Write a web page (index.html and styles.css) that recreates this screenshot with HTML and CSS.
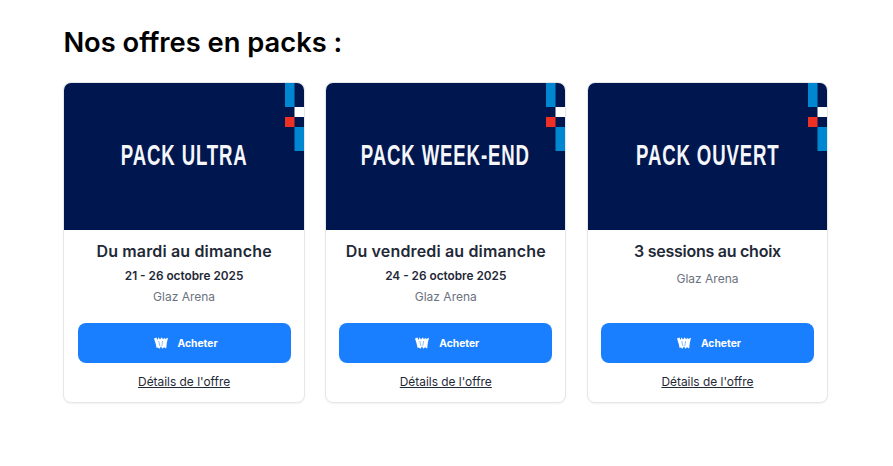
FILE: index.html
```html
<!DOCTYPE html>
<html lang="fr">
<head>
<meta charset="utf-8">
<title>Nos offres en packs</title>
<link rel="stylesheet" href="styles.css">
</head>
<body>
<main class="page">
  <h1 class="heading">Nos offres en packs :</h1>
  <div class="cards">
    <article class="card">
      <div class="banner">
        <span class="banner-title">PACK ULTRA</span>
        <svg class="flag" viewBox="0 0 20 68" preserveAspectRatio="none" aria-hidden="true"><rect x="0" y="0" width="10" height="24" fill="#0087d1"/><rect x="10" y="24" width="10" height="10" fill="#fff"/><rect x="0" y="34" width="10" height="10" fill="#ee3124"/><rect x="10" y="44" width="10" height="24" fill="#0087d1"/></svg>
      </div>
      <div class="body">
        <h2 class="title">Du mardi au dimanche</h2>
        <p class="date">21 - 26 octobre 2025</p>
        <p class="place">Glaz Arena</p>
        <a class="buy" href="#"><svg class="ticket" viewBox="0 0 14 12" aria-hidden="true"><path d="M0 1.5 2.4.6 3.6 3 4.4.3 6 2.4 7.8.3 9 2.4 10.2.8 11 2 14 .8 12.8 6 12.2 11.5 10 10.2 8.2 11.8 7 9.2 5.6 11.8 3.6 10.4 2.6 11 1.6 6.5Z" fill="#fff"/><path d="M4.8 4 5.8 9M8.6 4 7.8 9" stroke="#1a7fff" stroke-width=".5"/></svg>Acheter</a>
        <a class="details" href="#">Détails de l'offre</a>
      </div>
    </article>
    <article class="card">
      <div class="banner">
        <span class="banner-title">PACK WEEK-END</span>
        <svg class="flag" viewBox="0 0 20 68" preserveAspectRatio="none" aria-hidden="true"><rect x="0" y="0" width="10" height="24" fill="#0087d1"/><rect x="10" y="24" width="10" height="10" fill="#fff"/><rect x="0" y="34" width="10" height="10" fill="#ee3124"/><rect x="10" y="44" width="10" height="24" fill="#0087d1"/></svg>
      </div>
      <div class="body">
        <h2 class="title">Du vendredi au dimanche</h2>
        <p class="date">24 - 26 octobre 2025</p>
        <p class="place">Glaz Arena</p>
        <a class="buy" href="#"><svg class="ticket" viewBox="0 0 14 12" aria-hidden="true"><path d="M0 1.5 2.4.6 3.6 3 4.4.3 6 2.4 7.8.3 9 2.4 10.2.8 11 2 14 .8 12.8 6 12.2 11.5 10 10.2 8.2 11.8 7 9.2 5.6 11.8 3.6 10.4 2.6 11 1.6 6.5Z" fill="#fff"/><path d="M4.8 4 5.8 9M8.6 4 7.8 9" stroke="#1a7fff" stroke-width=".5"/></svg>Acheter</a>
        <a class="details" href="#">Détails de l'offre</a>
      </div>
    </article>
    <article class="card">
      <div class="banner">
        <span class="banner-title">PACK OUVERT</span>
        <svg class="flag" viewBox="0 0 20 68" preserveAspectRatio="none" aria-hidden="true"><rect x="0" y="0" width="10" height="24" fill="#0087d1"/><rect x="10" y="24" width="10" height="10" fill="#fff"/><rect x="0" y="34" width="10" height="10" fill="#ee3124"/><rect x="10" y="44" width="10" height="24" fill="#0087d1"/></svg>
      </div>
      <div class="body">
        <h2 class="title title-tight">3 sessions au choix</h2>
        <p class="place">Glaz Arena</p>
        <a class="buy" href="#"><svg class="ticket" viewBox="0 0 14 12" aria-hidden="true"><path d="M0 1.5 2.4.6 3.6 3 4.4.3 6 2.4 7.8.3 9 2.4 10.2.8 11 2 14 .8 12.8 6 12.2 11.5 10 10.2 8.2 11.8 7 9.2 5.6 11.8 3.6 10.4 2.6 11 1.6 6.5Z" fill="#fff"/><path d="M4.8 4 5.8 9M8.6 4 7.8 9" stroke="#1a7fff" stroke-width=".5"/></svg>Acheter</a>
        <a class="details" href="#">Détails de l'offre</a>
      </div>
    </article>
  </div>
</main>
</body>
</html>
```
FILE: styles.css
```css
* { box-sizing: border-box; }
html, body { margin: 0; height: 466px; overflow: hidden; background: #fff; }
body { font-family: Inter, "Noto Sans", "Liberation Sans", sans-serif; color: #1f2937; }
.page { padding: 25px 0 0 63.4px; }
.heading { margin: 0 0 21px; font-size: 27.3px; line-height: 36px; font-weight: 600; color: #000; }
.cards { display: grid; grid-template-columns: repeat(3, 241.4px); column-gap: 20.3px; }
.card { display: flex; flex-direction: column; height: 321px; border: 1px solid #e5e7eb; border-radius: 8px; overflow: hidden; box-shadow: 0 1px 2px rgba(0,0,0,.06); background: #fff; }
.banner { position: relative; height: 147px; flex: none; background: #00164f; display: flex; align-items: center; justify-content: center; }
.banner-title { font-family: "Liberation Sans", sans-serif; font-weight: 700; font-size: 30px; letter-spacing: 1.4px; color: #f4f6fa; transform: translateY(-2px) scaleX(.62); white-space: nowrap; }
.flag { position: absolute; top: 0; right: 0; width: 19px; height: 68px; display: block; }
.body { flex: 1; display: flex; flex-direction: column; align-items: center; padding: 11px 13px 11px; }
.title { margin: 0; font-size: 16px; line-height: 21px; font-weight: 600; letter-spacing: .15px; color: #1f2937; text-align: center; white-space: nowrap; }
.title-tight { letter-spacing: -.25px; }
.date { margin: 4px 0 0; font-size: 11.8px; line-height: 20px; font-weight: 600; color: #1f2937; }
.place { margin: 1px 0 0; font-size: 12px; line-height: 20px; color: #6b7280; }
.title + .place { margin-top: 7px; }
.buy { margin-top: auto; width: 213px; height: 40px; padding: 0 0 1px 3px; display: flex; align-items: center; justify-content: center; gap: 10px; border-radius: 8px; background: #1a7fff; color: #fff; font-size: 10.3px; font-weight: 700; text-decoration: none; }
.ticket { width: 14px; height: 12px; display: block; }
.details { margin-top: 10px; font-size: 11.9px; line-height: 18px; color: #1f2937; text-decoration: underline; }
```
